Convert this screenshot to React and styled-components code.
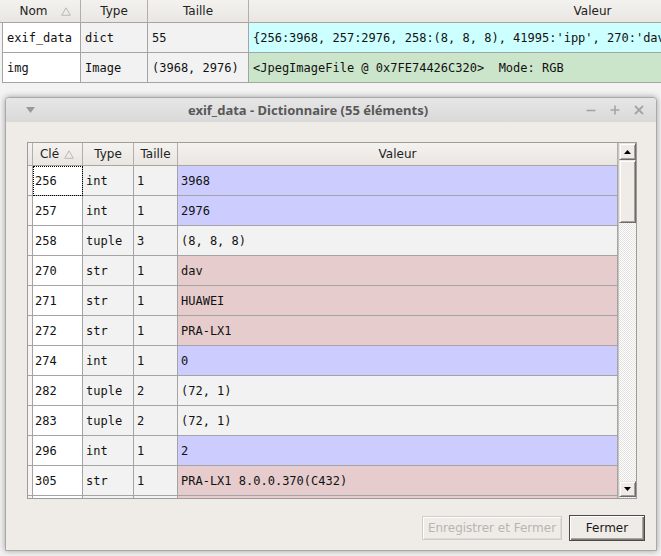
import React from 'react';
import styled, { createGlobalStyle } from 'styled-components';

const Global = createGlobalStyle`
  html, body { margin: 0; padding: 0; width: 661px; height: 556px; overflow: hidden; background: #efefef; }
  #root { width: 661px; height: 556px; }
  * { box-sizing: border-box; }
`;

const GRID = '#a4a4a4';
const MONO = '"DejaVu Sans Mono", "Liberation Mono", monospace';
const SANS = '"DejaVu Sans", "Liberation Sans", sans-serif';

const Desktop = styled.div`
  position: relative;
  width: 661px;
  height: 556px;
  overflow: hidden;
  background: #f3f3f3;
`;

const MainTable = styled.div`
  width: 937px;
  display: flex;
  flex-direction: column;
`;

const HeaderRow = styled.div`
  flex: none;
  display: grid;
  grid-template-columns: ${(p) => p.$cols};
  height: ${(p) => p.$h || 23}px;
`;

const HeaderCell = styled.div`
  display: flex;
  align-items: center;
  padding-left: ${(p) => p.$pl || 0}px;
  background: linear-gradient(#f4f2ef, #e9e6e2);
  border-right: 1px solid #b3b0ab;
  border-bottom: 1px solid #a8a5a0;
  font: 12px ${SANS};
  color: #222;
  overflow: hidden;
  white-space: nowrap;
`;

const HeaderLabel = styled.span`
  flex: 1;
  text-align: center;
`;

const SortMark = styled.svg`
  flex: none;
  margin-right: ${(p) => p.$mr}px;
`;

const BodyRow = styled.div`
  flex: none;
  display: grid;
  grid-template-columns: ${(p) => p.$cols};
  height: 30px;
  padding-left: ${(p) => p.$pl || 0}px;
`;

const Cell = styled.div`
  display: flex;
  align-items: center;
  padding-left: ${(p) => p.$pl || 4}px;
  background: ${(p) => p.$bg};
  border-right: 1px solid ${GRID};
  border-bottom: 1px solid ${GRID};
  border-left: ${(p) => (p.$first ? `1px solid ${GRID}` : 'none')};
  font: 12px ${MONO};
  color: #111;
  white-space: pre;
  overflow: hidden;
  outline: ${(p) => (p.$focus ? '1px dotted #000' : 'none')};
  outline-offset: -1px;
`;

const Dialog = styled.div`
  position: absolute;
  left: 5px;
  top: 97px;
  width: 652px;
  height: 454px;
  border: 1px solid #a9a9a9;
  border-radius: 4px 4px 0 0;
  background: #efebe7;
  box-shadow: 0 0 6px rgba(0, 0, 0, 0.35);
  display: flex;
  flex-direction: column;
`;

const TitleBar = styled.div`
  height: 24px;
  flex: none;
  display: flex;
  align-items: center;
  background: linear-gradient(#e6e6e6, #d9d9d9);
  border-radius: 3px 3px 0 0;
`;

const TitleMenu = styled.div`
  width: 29px;
  display: flex;
  justify-content: flex-end;
`;

const TitleText = styled.div`
  flex: 1;
  text-align: center;
  font: bold 13px "Noto Sans", "Open Sans", sans-serif;
  color: #585858;
  white-space: nowrap;
`;

const TitleButtons = styled.div`
  width: 75px;
  display: flex;
  align-items: center;
  gap: 14px;
  padding-left: 5px;
`;

const DialogBody = styled.div`
  flex: 1;
  display: flex;
  flex-direction: column;
  padding: 20px 11px 9px 21px;
`;

const TableFrame = styled.div`
  flex: none;
  width: 610px;
  height: 357px;
  border: 1px solid #9c9c9c;
  display: flex;
  background: #fff;
`;

const TableView = styled.div`
  width: 590px;
  height: 100%;
  overflow: hidden;
  display: flex;
  flex-direction: column;
`;

const ScrollBar = styled.div`
  width: 18px;
  height: 100%;
  display: flex;
  flex-direction: column;
  background: repeating-conic-gradient(#ffffff 0 25%, #e4e2de 0 50%) 0 0 / 2px 2px;
  border-left: 1px solid #c8c6c2;
`;

const Bevel = styled.div`
  flex: none;
  height: ${(p) => p.$h}px;
  background: #efebe7;
  border: 1px solid;
  border-color: #e9e7e3 #6c6c6c #6c6c6c #e9e7e3;
  box-shadow: inset 1px 1px #ffffff, inset -1px -1px #a3a09b;
  display: flex;
  align-items: center;
  justify-content: center;
`;

const Track = styled.div`
  flex: ${(p) => (p.$end ? 'none' : '1')};
  height: ${(p) => (p.$end ? '1px' : 'auto')};
`;

const ButtonRow = styled.div`
  margin-top: auto;
  display: flex;
  justify-content: flex-end;
  align-items: center;
  gap: 7px;
`;

const PushButton = styled.button`
  height: ${(p) => (p.$default ? 26 : 24)}px;
  width: ${(p) => p.$w}px;
  padding: 0;
  font: 12px ${SANS};
  background: #efebe7;
  color: ${(p) => (p.disabled ? '#b7b5b2' : '#1a1a1a')};
  border: 1px solid ${(p) => (p.$default ? '#4a4a4a' : '#cfcdca')};
  box-shadow: ${(p) =>
    p.$default
      ? 'inset 1px 1px #ffffff, inset -1px -1px #7d7b78, inset -2px -2px #a9a6a2'
      : 'inset 1px 1px #ffffff, inset -1px -1px #dddbd7'};
`;

const SortTriangle = ({ mr }) => (
  <SortMark $mr={mr} width="10" height="9" viewBox="0 0 10 9">
    <path d="M5 0.8 L9.3 8.3 L0.7 8.3 Z" fill="none" stroke="#b9b9b9" strokeWidth="1" />
  </SortMark>
);

const Arrow = ({ up }) => (
  <svg width="7" height="4" viewBox="0 0 7 4">
    <path d={up ? 'M3.5 0 L7 4 L0 4 Z' : 'M0 0 L7 0 L3.5 4 Z'} fill="#000" />
  </svg>
);

const topCols = '81px 67px 101px 688px';
const topBodyCols = '79px 67px 101px 688px';

const topRows = [
  ['exif_data', 'dict', '55', "{256:3968, 257:2976, 258:(8, 8, 8), 41995:'ipp', 270:'dav', 271:'HUAWEI'}", '#ccffff'],
  ['img', 'Image', '(3968, 2976)', '<JpegImageFile @ 0x7FE74426C320>  Mode: RGB', '#cbe5cb'],
];

const valueBg = { int: '#ccccff', str: '#e6cccc', tuple: '#f2f2f2' };

const dictRows = [
  { k: '256', t: 'int', s: '1', v: '3968' },
  { k: '257', t: 'int', s: '1', v: '2976' },
  { k: '258', t: 'tuple', s: '3', v: '(8, 8, 8)' },
  { k: '270', t: 'str', s: '1', v: 'dav' },
  { k: '271', t: 'str', s: '1', v: 'HUAWEI' },
  { k: '272', t: 'str', s: '1', v: 'PRA-LX1' },
  { k: '274', t: 'int', s: '1', v: '0' },
  { k: '282', t: 'tuple', s: '2', v: '(72, 1)' },
  { k: '283', t: 'tuple', s: '2', v: '(72, 1)' },
  { k: '296', t: 'int', s: '1', v: '2' },
  { k: '305', t: 'str', s: '1', v: 'PRA-LX1 8.0.0.370(C432)' },
  { k: '', t: 'str', s: '', v: '', partial: true },
];

const dCols = '5px 50px 51px 44px 440px';

export default function App() {
  return (
    <Desktop>
      <Global />
      <MainTable>
        <HeaderRow $cols={topCols}>
          <HeaderCell $pl={6}>
            <HeaderLabel>Nom</HeaderLabel>
            <SortTriangle mr={9} />
          </HeaderCell>
          <HeaderCell><HeaderLabel>Type</HeaderLabel></HeaderCell>
          <HeaderCell><HeaderLabel>Taille</HeaderLabel></HeaderCell>
          <HeaderCell><HeaderLabel>Valeur</HeaderLabel></HeaderCell>
        </HeaderRow>
        {topRows.map((r) => (
          <BodyRow key={r[0]} $cols={topBodyCols} $pl={2}>
            <Cell $first $bg="#ffffff">{r[0]}</Cell>
            <Cell $bg="#f2f2f2">{r[1]}</Cell>
            <Cell $bg="#f2f2f2">{r[2]}</Cell>
            <Cell $bg={r[4]}>{r[3]}</Cell>
          </BodyRow>
        ))}
      </MainTable>

      <Dialog>
        <TitleBar>
          <TitleMenu>
            <svg width="9" height="6" viewBox="0 0 9 6">
              <path d="M0 0 L9 0 L4.5 6 Z" fill="#9a9a9a" />
            </svg>
          </TitleMenu>
          <TitleText>exif_data - Dictionnaire (55 éléments)</TitleText>
          <TitleButtons>
            <svg width="10" height="10" viewBox="0 0 10 10">
              <path d="M0.5 5.5 H9.5" stroke="#a5a5a5" strokeWidth="1.6" />
            </svg>
            <svg width="10" height="10" viewBox="0 0 10 10">
              <path d="M0.5 5 H9.5 M5 0.5 V9.5" stroke="#a5a5a5" strokeWidth="1.6" />
            </svg>
            <svg width="10" height="10" viewBox="0 0 10 10">
              <path d="M1 1 L9 9 M9 1 L1 9" stroke="#a5a5a5" strokeWidth="1.8" />
            </svg>
          </TitleButtons>
        </TitleBar>

        <DialogBody>
          <TableFrame>
            <TableView>
              <HeaderRow $cols={dCols}>
                <HeaderCell />
                <HeaderCell $pl={2}>
                  <HeaderLabel>Clé</HeaderLabel>
                  <SortTriangle mr={8} />
                </HeaderCell>
                <HeaderCell><HeaderLabel>Type</HeaderLabel></HeaderCell>
                <HeaderCell><HeaderLabel>Taille</HeaderLabel></HeaderCell>
                <HeaderCell><HeaderLabel>Valeur</HeaderLabel></HeaderCell>
              </HeaderRow>
              {dictRows.map((r, i) => (
                <BodyRow key={i} $cols={dCols}>
                  <Cell $bg="#f6f5f3" />
                  <Cell $bg="#ffffff" $pl={2} $focus={i === 0}>{r.k}</Cell>
                  <Cell $bg="#f2f2f2" $pl={3}>{r.partial ? '' : r.t}</Cell>
                  <Cell $bg="#f2f2f2" $pl={3}>{r.s}</Cell>
                  <Cell $bg={valueBg[r.t]} $pl={3}>{r.v}</Cell>
                </BodyRow>
              ))}
            </TableView>
            <ScrollBar>
              <Bevel $h={17}><Arrow up /></Bevel>
              <Bevel $h={63} />
              <Track />
              <Bevel $h={16}><Arrow /></Bevel>
              <Track $end />
            </ScrollBar>
          </TableFrame>
          <ButtonRow>
            <PushButton disabled $w={140}>Enregistrer et Fermer</PushButton>
            <PushButton $default $w={76}>Fermer</PushButton>
          </ButtonRow>
        </DialogBody>
      </Dialog>
    </Desktop>
  );
}
